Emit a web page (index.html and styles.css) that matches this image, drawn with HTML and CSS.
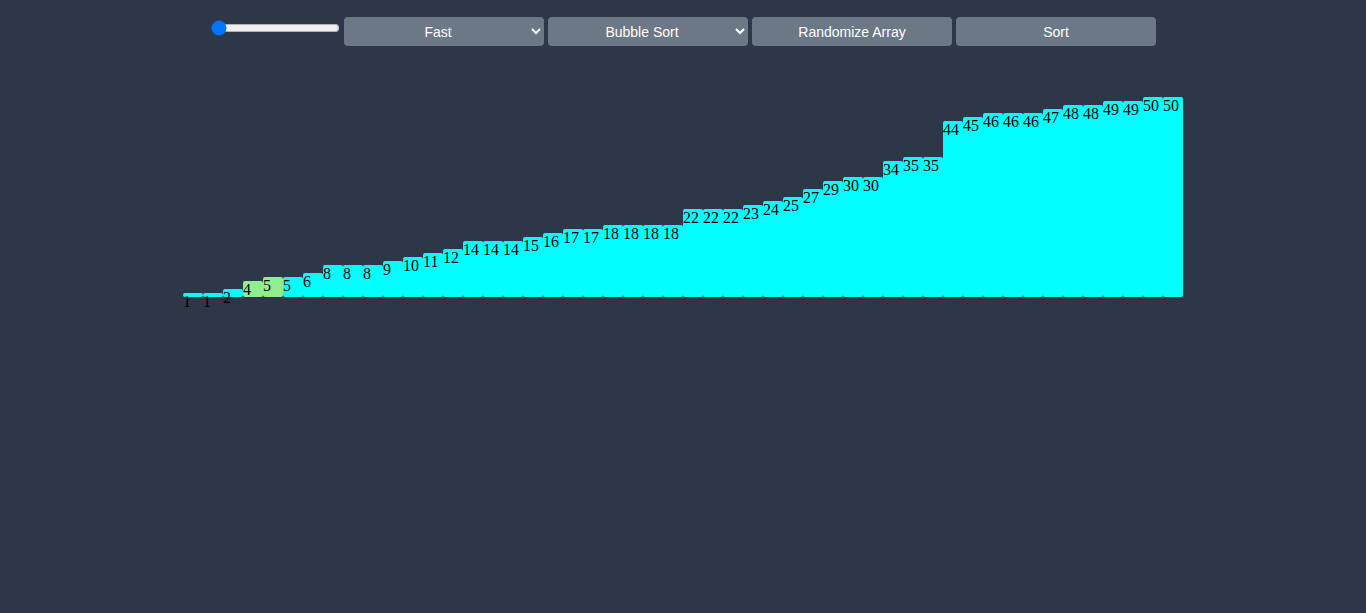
FILE: index.html
```html
<!DOCTYPE html>
<html>
<head>
<meta charset="utf-8">
<title>Sorting Visualizer</title>
<link rel="stylesheet" href="styles.css">
</head>
<body>
<div class="controls">
  <input class="speed" type="range" min="1" max="100" value="1">
  <select class="ctl">
    <option>Fast</option>
    <option>Medium</option>
    <option>Slow</option>
  </select>
  <select class="ctl">
    <option>Bubble Sort</option>
    <option>Selection Sort</option>
    <option>Insertion Sort</option>
  </select>
  <button class="ctl">Randomize Array</button>
  <button class="ctl">Sort</button>
</div>
<div class="bars" id="bars"></div>
<script src="script.js"></script>
</body>
</html>
```

FILE: styles.css
```css
html, body {
  margin: 0;
  padding: 0;
  background: #2d3748;
  height: 100%;
}
.controls {
  display: flex;
  justify-content: center;
  align-items: center;
  gap: 4px;
  padding-top: 17px;
  padding-right: 3px;
}
.speed {
  width: 129px;
  margin: 0 0 8px 4px;
}
.ctl {
  width: 200px;
  height: 29px;
  border: none;
  border-radius: 4px;
  background-color: #6b7886;
  color: #ffffff;
  font-family: "Liberation Sans", Arial, sans-serif;
  font-size: 14px;
  text-align: center;
  text-align-last: center;
  padding: 0 8px;
}
.bars {
  display: flex;
  justify-content: center;
  align-items: flex-end;
  height: 200px;
  margin-top: 51px;
}
.bar {
  width: 20px;
  background: #00ffff;
  border-radius: 2px;
  font-family: "Liberation Serif", "Times New Roman", serif;
  font-size: 16px;
  color: #000;
  white-space: nowrap;
  line-height: normal;
}
.bar.active {
  background: #90ee90;
}
```

FILE: script.js
```js
var vals = [1,1,2,4,5,5,6,8,8,8,9,10,11,12,14,14,14,15,16,17,17,18,18,18,18,22,22,22,23,24,25,27,29,30,30,34,35,35,44,45,46,46,46,47,48,48,49,49,50,50];
var c = document.getElementById('bars');
vals.forEach(function (v, i) {
  var d = document.createElement('div');
  d.className = 'bar' + (i === 3 || i === 4 ? ' active' : '');
  d.style.height = (v * 4) + 'px';
  d.textContent = v;
  c.appendChild(d);
});
```
